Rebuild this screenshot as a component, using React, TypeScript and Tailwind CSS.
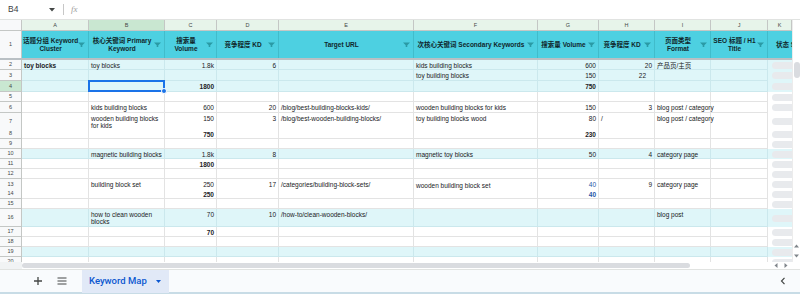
import React from 'react';

type Cell = {
  t?: string;
  b?: boolean; // bold
  r?: boolean; // right aligned
  c?: string; // extra classes
  sel?: boolean;
};

type Row = {
  n: number;
  h: string;
  band?: boolean;
  cells: Cell[];
};

const COLS = 'grid grid-cols-[22px_67px_76px_52px_62px_135px_124px_61px_56px_56px_57px_24px]';

const letters = ['A', 'B', 'C', 'D', 'E', 'F', 'G', 'H', 'I', 'J', 'K'];

// header row 1
const headers = [
  '话题分组 Keyword\nCluster',
  '核心关键词 Primary\nKeyword',
  '搜索量\nVolume',
  '竞争程度 KD',
  'Target URL',
  '次核心关键词 Secondary Keywords',
  '搜索量 Volume',
  '竞争程度 KD',
  '页面类型\nFormat',
  'SEO 标题 / H1\nTitle',
];

const E: Cell = {};
const blue = 'text-[#2456a6]';

const rows: Row[] = [
  {
    n: 2, h: 'h-[10px]', band: true,
    cells: [{ t: 'toy blocks', b: true }, { t: 'toy blocks' }, { t: '1.8k', r: true }, { t: '6', r: true }, E, { t: 'kids building blocks' }, { t: '600', r: true }, { t: '20', r: true }, { t: '产品页/主页' }, E],
  },
  {
    n: 3, h: 'h-[11px]', band: true,
    cells: [E, E, E, E, E, { t: 'toy building blocks' }, { t: '150', r: true }, { t: '22', r: true, c: 'pr-[8px]' }, E, E],
  },
  {
    n: 4, h: 'h-[11px]', band: true,
    cells: [E, { sel: true }, { t: '1800', r: true, b: true }, E, E, E, { t: '750', r: true, b: true }, E, E, E],
  },
  { n: 5, h: 'h-[10px]', cells: [E, E, E, E, E, E, E, E, E, E] },
  {
    n: 6, h: 'h-[11px]',
    cells: [E, { t: 'kids building blocks' }, { t: '600', r: true }, { t: '20', r: true }, { t: '/blog/best-building-blocks-kids/' }, { t: 'wooden building blocks for kids' }, { t: '150', r: true }, { t: '3', r: true }, { t: 'blog post / category' }, E],
  },
  {
    n: 7, h: 'h-[16px]',
    cells: [E, { t: 'wooden building blocks\nfor kids' }, { t: '150', r: true }, { t: '3', r: true }, { t: '/blog/best-wooden-building-blocks/' }, { t: 'toy building blocks wood' }, { t: '80', r: true }, { t: '/' }, { t: 'blog post / category' }, E],
  },
  {
    n: 8, h: 'h-[10px]',
    cells: [E, E, { t: '750', r: true, b: true }, E, E, E, { t: '230', r: true, b: true }, E, E, E],
  },
  { n: 9, h: 'h-[10px]', cells: [E, E, E, E, E, E, E, E, E, E] },
  {
    n: 10, h: 'h-[10px]', band: true,
    cells: [E, { t: 'magnetic building blocks' }, { t: '1.8k', r: true }, { t: '8', r: true }, E, { t: 'magnetic toy blocks' }, { t: '50', r: true }, { t: '4', r: true }, { t: 'category page' }, E],
  },
  {
    n: 11, h: 'h-[10px]',
    cells: [E, E, { t: '1800', r: true, b: true }, E, E, E, E, E, E, E],
  },
  { n: 12, h: 'h-[10px]', cells: [E, E, E, E, E, E, E, E, E, E] },
  {
    n: 13, h: 'h-[10px]',
    cells: [E, { t: 'building block set' }, { t: '250', r: true }, { t: '17', r: true }, { t: '/categories/building-block-sets/' }, { t: 'wooden building block set', c: 'pt-[3px]' }, { t: '40', r: true, c: blue }, { t: '9', r: true }, { t: 'category page' }, E],
  },
  {
    n: 14, h: 'h-[10px]',
    cells: [E, E, { t: '250', r: true, b: true }, E, E, E, { t: '40', r: true, b: true, c: blue }, E, E, E],
  },
  { n: 15, h: 'h-[10px]', cells: [E, E, E, E, E, E, E, E, E, E] },
  {
    n: 16, h: 'h-[18px]', band: true,
    cells: [E, { t: 'how to clean wooden\nblocks' }, { t: '70', r: true }, { t: '10', r: true }, { t: '/how-to/clean-wooden-blocks/' }, E, E, E, { t: 'blog post' }, E],
  },
  {
    n: 17, h: 'h-[10px]',
    cells: [E, E, { t: '70', r: true, b: true }, E, E, E, E, E, E, E],
  },
  { n: 18, h: 'h-[10px]', cells: [E, E, E, E, E, E, E, E, E, E] },
  { n: 19, h: 'h-[10px]', band: true, cells: [E, E, E, E, E, E, E, E, E, E] },
  { n: 20, h: 'h-[10px]', cells: [E, E, E, E, E, E, E, E, E, E] },
];

const FilterIcon = () => (
  <svg width="7" height="5" viewBox="0 0 7 5" className="shrink-0">
    <path d="M0 0.5h7L4.3 3.2V5H2.7V3.2z" fill="#2a9aa5" />
  </svg>
);

const App: React.FC = () => {
  return (
    <div className="w-[800px] h-[294px] overflow-hidden bg-white text-[#202124] font-['Liberation_Sans','Noto_Sans_CJK_SC',sans-serif]">
      {/* Formula bar */}
      <div className="h-[20px] flex items-center border-b border-[#e1e3e1] bg-white">
        <span className="w-[49px] pl-[8px] text-[8.5px] text-[#3c4043]">B4</span>
        <svg width="6" height="4" viewBox="0 0 6 4">
          <path d="M0 0h6L3 3.5z" fill="#444746" />
        </svg>
        <div className="ml-[8px] w-px h-[11px] bg-[#c7c7c7]" />
        <span className="ml-[7px] text-[9px] italic text-[#a0a0a0] font-['Liberation_Serif',serif]">fx</span>
      </div>

      {/* Sheet + vertical scrollbar */}
      <div className="flex h-[242px]">
        <div className="w-[792px] h-[242px] overflow-hidden">
          {/* Column letters */}
          <div className={`${COLS} h-[11px] border-b border-[#c4c7c5]`}>
            <div className="bg-[#f8f9fa] border-r border-[#c4c7c5]" />
            {letters.map((l) => (
              <div
                key={l}
                className={`flex items-center justify-center text-[5.5px] text-[#444746] border-r border-[#c4c7c5] ${l === 'B' ? 'bg-[#c9e7d1]' : 'bg-[#e7f4ea]'}`}
              >
                {l}
              </div>
            ))}
          </div>

          {/* Header row 1 */}
          <div className={`${COLS} h-[29px] border-b-2 border-[#b9c0c4]`}>
            <div className="flex items-center justify-center bg-[#f8f9fa] border-r border-[#c4c7c5] text-[5.5px] text-[#444746]">1</div>
            {headers.map((h, i) => (
              <div key={i} className="flex items-center bg-[#4dd0e1] border-r border-[#41bccb] pl-[1px] pr-[3px] overflow-hidden">
                <span className="flex-1 text-center whitespace-pre text-[6.5px] leading-[8px] font-bold text-[#10272b]">{h}</span>
                <FilterIcon />
              </div>
            ))}
            <div className="flex items-center bg-[#4dd0e1] pl-[8px] overflow-hidden whitespace-nowrap text-[6.5px] font-bold text-[#10272b]">
              状态 Status
            </div>
          </div>

          {/* Data rows: text may spill into the empty cell on its right, as in Sheets */}
          {rows.map((row) => {
            const line = row.band ? 'border-[#cbe8ed]' : 'border-[#e3e3e3]';
            const bg = row.band ? 'bg-[#dff6f9]' : 'bg-white';
            return (
              <div key={row.n} className={`${COLS} ${row.h}`}>
                <div
                  className={`flex items-center justify-center border-r border-b border-[#c4c7c5] text-[5.5px] text-[#444746] ${row.n === 4 ? 'bg-[#c9e7d1]' : 'bg-[#f8f9fa]'}`}
                >
                  {row.n}
                </div>
                {row.cells.map((cell, i) => (
                  <div
                    key={i}
                    className={`${cell.sel ? 'relative z-10' : ''} ${bg} border-r border-b ${line} px-[2px] pt-[1.5px] text-[6.5px] leading-[7px] whitespace-pre ${cell.r ? 'text-right' : 'text-left'} ${cell.b ? 'font-bold' : ''} ${cell.c ?? ''}`}
                  >
                    {cell.t && <span className="relative z-[1]">{cell.t}</span>}
                    {cell.sel && (
                      <>
                        <div className="absolute -inset-[1px] border-2 border-[#1a73e8]" />
                        <div className="absolute -right-[3px] -bottom-[3px] w-[6px] h-[6px] rounded-full bg-[#1a73e8] border border-white" />
                      </>
                    )}
                  </div>
                ))}
                <div className={`${bg} flex items-center pl-[4px]`}>
                  <div className="w-full h-[7px] rounded-l-full bg-[#e8eaed]" />
                </div>
              </div>
            );
          })}
        </div>

        {/* Vertical scrollbar */}
        <div className="w-[8px] h-[242px] flex flex-col items-center bg-white border-l border-[#ececec]">
          <div className="h-[42px]" />
          <div className="w-[6px] h-[16px] rounded-full bg-[#dadce0]" />
          <div className="flex-1" />
          <svg width="5" height="4" viewBox="0 0 5 4" className="mb-[6px]">
            <path d="M0 3.5h5L2.5 0.5z" fill="#80868b" />
          </svg>
          <svg width="5" height="4" viewBox="0 0 5 4" className="mb-[4px]">
            <path d="M0 0.5h5L2.5 3.5z" fill="#80868b" />
          </svg>
        </div>
      </div>

      {/* Horizontal scrollbar */}
      <div className="h-[7px] flex items-center bg-white">
        <div className="w-[22px] h-full bg-[#f1f3f4]" />
        <div className="w-[668px] h-[5px] rounded-full bg-[#dadce0]" />
        <div className="flex-1" />
        <div className="flex items-center gap-[6px] pr-[12px]">
          <svg width="4" height="5" viewBox="0 0 4 5">
            <path d="M3.5 0v5L0.5 2.5z" fill="#80868b" />
          </svg>
          <svg width="4" height="5" viewBox="0 0 4 5">
            <path d="M0.5 0v5L3.5 2.5z" fill="#80868b" />
          </svg>
        </div>
      </div>

      {/* Sheet tabs */}
      <div className="h-[23px] flex items-center bg-[#f9fbfd] border-t border-[#e1e3e1]">
        <svg width="10" height="10" viewBox="0 0 10 10" className="ml-[33px]">
          <path d="M5 1v8M1 5h8" stroke="#444746" strokeWidth="1.3" />
        </svg>
        <svg width="10" height="8" viewBox="0 0 10 8" className="ml-[14px]">
          <path d="M0.5 1h9M0.5 4h9M0.5 7h9" stroke="#444746" strokeWidth="1.2" />
        </svg>
        <div className="ml-[15px] h-[23px] w-[87px] flex items-center bg-[#e1e9f7] pl-[7px]">
          <span className="text-[9.5px] font-medium text-[#0b57d0] font-['Roboto',sans-serif]">Keyword Map</span>
          <svg width="5" height="3" viewBox="0 0 5 3" className="ml-[9px]">
            <path d="M0 0h5L2.5 3z" fill="#0b57d0" />
          </svg>
        </div>
        <div className="flex-1" />
        <svg width="6" height="8" viewBox="0 0 6 8" className="mr-[14px]">
          <path d="M4.5 0.8L1.5 4l3 3.2" stroke="#444746" strokeWidth="1.2" fill="none" />
        </svg>
      </div>
      <div className="h-[2px] bg-[#c8dce6]" />
    </div>
  );
};

export default App;
